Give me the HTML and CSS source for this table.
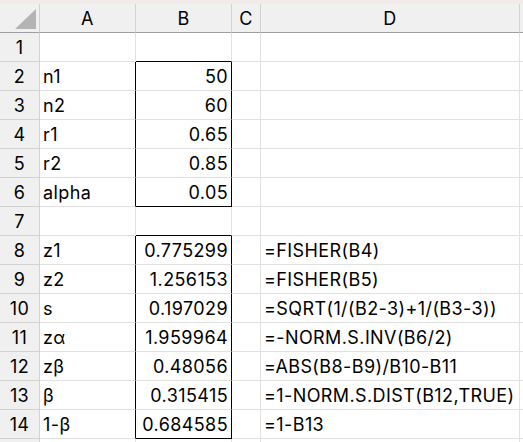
FILE: index.html
```html
<!DOCTYPE html>
<html>
<head>
<meta charset="utf-8">
<link rel="stylesheet" href="styles.css">
</head>
<body>
<div class="topstrip"></div>
<div class="sheet">
  <div class="hd corner"><span class="tri"></span></div>
  <div class="hd col">A</div>
  <div class="hd col">B</div>
  <div class="hd col">C</div>
  <div class="hd col">D</div>
  <div class="hd col rest"></div>

  <div class="rn">1</div><div class="c"></div><div class="c bt"></div><div class="c"></div><div class="c"></div><div class="c rest"></div>
  <div class="rn">2</div><div class="c bl">n1</div><div class="c num bx">50</div><div class="c"></div><div class="c"></div><div class="c rest"></div>
  <div class="rn">3</div><div class="c bl">n2</div><div class="c num bx">60</div><div class="c"></div><div class="c"></div><div class="c rest"></div>
  <div class="rn">4</div><div class="c bl">r1</div><div class="c num bx">0.65</div><div class="c"></div><div class="c"></div><div class="c rest"></div>
  <div class="rn">5</div><div class="c bl">r2</div><div class="c num bx">0.85</div><div class="c"></div><div class="c"></div><div class="c rest"></div>
  <div class="rn">6</div><div class="c bl">alpha</div><div class="c num bx bb">0.05</div><div class="c"></div><div class="c"></div><div class="c rest"></div>
  <div class="rn">7</div><div class="c"></div><div class="c bt"></div><div class="c"></div><div class="c"></div><div class="c rest"></div>
  <div class="rn">8</div><div class="c bl">z1</div><div class="c num bx">0.775299</div><div class="c"></div><div class="c">=FISHER(B4)</div><div class="c rest"></div>
  <div class="rn">9</div><div class="c bl">z2</div><div class="c num bx">1.256153</div><div class="c"></div><div class="c">=FISHER(B5)</div><div class="c rest"></div>
  <div class="rn">10</div><div class="c bl">s</div><div class="c num bx">0.197029</div><div class="c"></div><div class="c">=SQRT(1/(B2-3)+1/(B3-3))</div><div class="c rest"></div>
  <div class="rn">11</div><div class="c bl">zα</div><div class="c num bx">1.959964</div><div class="c"></div><div class="c">=-NORM.S.INV(B6/2)</div><div class="c rest"></div>
  <div class="rn">12</div><div class="c bl">zβ</div><div class="c num bx">0.48056</div><div class="c"></div><div class="c">=ABS(B8-B9)/B10-B11</div><div class="c rest"></div>
  <div class="rn">13</div><div class="c bl">β</div><div class="c num bx">0.315415</div><div class="c"></div><div class="c">=1-NORM.S.DIST(B12,TRUE)</div><div class="c rest"></div>
  <div class="rn">14</div><div class="c bl">1-β</div><div class="c num bx bb">0.684585</div><div class="c"></div><div class="c">=1-B13</div><div class="c rest"></div>
  <div class="rn"></div><div class="c"></div><div class="c"></div><div class="c"></div><div class="c"></div><div class="c rest"></div>
</div>
</body>
</html>
```
FILE: styles.css
```css
html, body {
  margin: 0;
  padding: 0;
  background: #ffffff;
  overflow: hidden;
}
body {
  width: 523px;
  height: 442px;
  font-family: Inter, "Liberation Sans", sans-serif;
  font-size: 18px;
  letter-spacing: 0.4px;
  color: #000;
}
.topstrip {
  height: 4px;
  background: #f2e9e9;
}
.sheet {
  height: 438px;
  overflow: hidden;
  display: grid;
  grid-template-columns: 40px 96px 96px 29px 259px 1fr;
  grid-template-rows: repeat(16, 29px);
}
.hd {
  background: #f0f0f0;
  border-right: 1px solid #d2d2d2;
  border-bottom: 1px solid #9e9e9e;
  box-sizing: border-box;
  display: flex;
  align-items: center;
  justify-content: center;
}
.hd.rest { border-right: none; }
.corner { position: relative; }
.tri {
  position: absolute;
  right: 3px;
  bottom: 3px;
  width: 0;
  height: 0;
  border-left: 21px solid transparent;
  border-bottom: 20px solid #b4b4b4;
}
.rn {
  background: #f0f0f0;
  border-right: 1px solid #d2d2d2;
  border-bottom: 1px solid #d2d2d2;
  box-sizing: border-box;
  display: flex;
  align-items: center;
  justify-content: center;
}
.c {
  border-right: 1px solid #e1e1e1;
  border-bottom: 1px solid #e1e1e1;
  box-sizing: border-box;
  display: flex;
  align-items: center;
  padding: 0 3px;
  white-space: nowrap;
}
.c.rest { border-right: none; }
.num { justify-content: flex-end; padding-right: 3px; }
.bl { border-right-color: #000; }
.bx { border-right-color: #000; }
.bt { border-bottom-color: #000; }
.bb { border-bottom-color: #000; }
```
